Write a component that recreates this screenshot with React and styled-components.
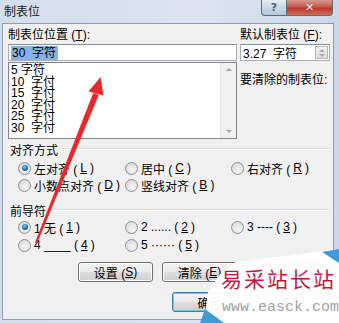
import React from "react";
import styled, { createGlobalStyle } from "styled-components";

const GlobalStyle = createGlobalStyle`
  html, body {
    margin: 0;
    padding: 0;
    background: #ffffff;
  }
  body {
    font-family: "Liberation Sans", "Noto Sans CJK SC", sans-serif;
    font-size: 12px;
    color: #000;
  }
`;

export const Window = styled.div`
  position: relative;
  width: 339px;
  height: 323px;
  overflow: hidden;
  background: linear-gradient(90deg, #d3deec 0%, #dce5f0 60%, #c9d7e8 100%);
  display: flex;
  flex-direction: column;
`;

export const TitleBar = styled.div`
  height: 23px;
  display: flex;
  align-items: flex-start;
  justify-content: space-between;
  padding-left: 4px;
`;

export const Title = styled.span`
  margin-top: 4px;
  font-size: 12px;
  line-height: 14px;
  font-family: "Noto Sans CJK SC", sans-serif;
  color: #1a1a1a;
`;

export const Controls = styled.div`
  display: flex;
  margin-right: 6px;
`;

export const CtrlButton = styled.div`
  width: ${(p) => p.$w}px;
  height: 16px;
  box-sizing: border-box;
  border: 1px solid #5d6b7d;
  border-top: none;
  display: flex;
  align-items: center;
  justify-content: center;
  font-family: "DejaVu Sans", sans-serif;
  font-weight: bold;
  font-size: 11px;
  background: ${(p) =>
    p.$close
      ? "linear-gradient(#d79b92 0%, #c8594b 45%, #b8392a 55%, #d46a56 100%)"
      : "linear-gradient(#e3ebf4 0%, #c9d6e6 50%, #b7c8dc 100%)"};
  color: ${(p) => (p.$close ? "#fff" : "#506178")};
  text-shadow: ${(p) => (p.$close ? "0 0 1px #3a1010" : "none")};
  border-radius: ${(p) => (p.$close ? "0 0 4px 0" : "0 0 0 4px")};
  border-left: ${(p) => (p.$close ? "none" : "1px solid #5d6b7d")};
`;

export const Body = styled.div`
  flex: 1;
  margin: 0 5px 3px 2px;
  border: 1px solid #8d9db1;
  background: #f0f0f0;
  display: flex;
  flex-direction: column;
  font-family: "Liberation Sans", "Noto Sans CJK SC", sans-serif;
`;

export const Top = styled.div`
  display: flex;
  padding: 4px 0 0 5px;
`;

export const LeftCol = styled.div`
  width: 229px;
  display: flex;
  flex-direction: column;
`;

export const RightCol = styled.div`
  width: 90px;
  margin-left: 3px;
  display: flex;
  flex-direction: column;
`;

export const Label = styled.div`
  height: 14px;
  line-height: 14px;
  white-space: nowrap;
  margin-top: ${(p) => p.$mt || 0}px;
`;

export const TextBox = styled.div`
  margin-top: 2px;
  height: 17px;
  box-sizing: border-box;
  border: 1px solid #abadb3;
  border-top-color: #888c94;
  background: #fff;
  display: flex;
  align-items: center;
  padding-left: 2px;
  position: relative;
  white-space: pre;
`;

export const Selected = styled.span`
  background: #86b3e6;
  line-height: 14px;
  padding: 0 2px 0 1px;
  white-space: pre;
`;

export const ListBox = styled.div`
  margin-top: 1px;
  height: 77px;
  box-sizing: border-box;
  border: 1px solid #828790;
  background: #fff;
  display: flex;
`;

export const Items = styled.div`
  flex: 1;
  padding: 2px 0 0 2px;
  display: flex;
  flex-direction: column;
`;

export const Item = styled.div`
  height: 11.5px;
  line-height: 11.5px;
  white-space: pre;
`;

export const ScrollBar = styled.div`
  width: 15px;
  background: #f1f1f1;
  border-left: 1px solid #e6e6e6;
  display: flex;
  flex-direction: column;
  justify-content: space-between;
  align-items: center;
  padding: 5px 0;
`;

export const Arrow = styled.span`
  width: 0;
  height: 0;
  border-left: 3px solid transparent;
  border-right: 3px solid transparent;
  ${(p) =>
    p.$down ? "border-top: 3px solid #a8a8a8;" : "border-bottom: 3px solid #a8a8a8;"}
`;

export const SpinBox = styled.div`
  display: flex;
  flex-direction: column;
  justify-content: center;
  gap: 2px;
  position: absolute;
  right: 1px;
  top: 1px;
  bottom: 1px;
  width: 13px;
  align-items: center;
  background: linear-gradient(#f3f3f3, #dcdcdc);
  border: 1px solid #b5b5b5;
  box-sizing: border-box;
`;

export const Heading = styled.div`
  display: flex;
  align-items: center;
  gap: 4px;
  height: 14px;
  padding-left: 7px;
  margin-top: ${(p) => p.$mt}px;
  white-space: nowrap;
  &::after {
    content: "";
    flex: 1;
    height: 1px;
    margin-right: 3px;
    background: #d5dfe5;
    border-bottom: 1px solid #fff;
  }
`;

export const RadioGrid = styled.div`
  display: grid;
  grid-template-columns: 107px 106px 1fr;
  row-gap: ${(p) => p.$gap}px;
  padding-left: 15px;
  margin-top: ${(p) => p.$mt}px;
`;

export const Option = styled.div`
  display: flex;
  align-items: center;
  gap: 3px;
  height: 14px;
  white-space: pre;
`;

export const Radio = styled.span`
  width: 13px;
  height: 13px;
  box-sizing: border-box;
  border-radius: 50%;
  border: 1px solid #8e8f8f;
  background: radial-gradient(circle at 60% 65%, #f6f6f6 0%, #e2e2e2 55%, #cfcfcf 100%);
  display: flex;
  align-items: center;
  justify-content: center;
  flex-shrink: 0;
  &::after {
    content: "";
    display: ${(p) => (p.$checked ? "block" : "none")};
    width: 6px;
    height: 6px;
    border-radius: 50%;
    background: radial-gradient(circle at 40% 35%, #8fd0f2 0%, #2878b6 45%, #0e3f6e 100%);
  }
`;

export const ButtonRow = styled.div`
  display: flex;
  gap: 9px;
  padding-left: ${(p) => p.$pl}px;
  margin-top: 10px;
`;

export const Button = styled.div`
  width: 75px;
  height: 20px;
  box-sizing: border-box;
  border: 1px solid ${(p) => (p.$default ? "#3c7fb1" : "#707070")};
  border-radius: 3px;
  background: linear-gradient(#f2f2f2 0%, #ebebeb 48%, #dddddd 52%, #cfcfcf 100%);
  box-shadow: ${(p) => (p.$default ? "inset 0 0 0 1px #6fc8f0" : "inset 0 0 0 1px #fcfcfc")};
  display: flex;
  align-items: center;
  justify-content: center;
  white-space: pre;
`;

export const Overlay = styled.svg`
  position: absolute;
  left: 0;
  top: 0;
  pointer-events: none;
`;

export const MarkTitle = styled.div`
  position: absolute;
  left: 221px;
  top: 265px;
  font-family: "Noto Sans CJK SC", serif;
  font-size: 21px;
  line-height: 26px;
  letter-spacing: 2px;
  color: #c5163e;
  white-space: nowrap;
`;

export const MarkUrl = styled.div`
  position: absolute;
  left: 222px;
  top: 300px;
  font-family: "Liberation Mono", monospace;
  font-size: 15px;
  line-height: 16px;
  color: #a3a3a3;
  white-space: nowrap;
`;

const Key = ({ k }) => (
  <>
    {" "}(<u>{k}</u>)
  </>
);

const tabs = ["5 字符", "10  字付", "15  字付", "20  字付", "25  字付", "30  字付"];

const align = [
  { text: "左对齐", k: "L", checked: true },
  { text: "居中", k: "C" },
  { text: "右对齐", k: "R" },
  { text: "小数点对齐", k: "D" },
  { text: "竖线对齐", k: "B" },
];

const leaders = [
  { text: "1 无", k: "1", checked: true },
  { text: "2 ......", k: "2" },
  { text: "3 ----", k: "3" },
  { text: "4 ____", k: "4" },
  { text: "5 ······", k: "5" },
];

function App() {
  return (
    <Window>
      <GlobalStyle />
      <TitleBar>
        <Title>制表位</Title>
        <Controls>
          <CtrlButton $w={26}>?</CtrlButton>
          <CtrlButton $w={46} $close>
            ✕
          </CtrlButton>
        </Controls>
      </TitleBar>
      <Body>
        <Top>
          <LeftCol>
            <Label>
              制表位位置<Key k="T" />:
            </Label>
            <TextBox>
              <Selected>30  字符</Selected>
            </TextBox>
            <ListBox>
              <Items>
                {tabs.map((t) => (
                  <Item key={t}>{t}</Item>
                ))}
              </Items>
              <ScrollBar>
                <Arrow />
                <Arrow $down />
              </ScrollBar>
            </ListBox>
          </LeftCol>
          <RightCol>
            <Label>
              默认制表位<Key k="F" />:
            </Label>
            <TextBox>
              3.27  字符
              <SpinBox>
                <Arrow />
                <Arrow $down />
              </SpinBox>
            </TextBox>
            <Label $mt={12}>要清除的制表位:</Label>
          </RightCol>
        </Top>

        <Heading $mt={3}>对齐方式</Heading>
        <RadioGrid $gap={3} $mt={5}>
          {align.map((o) => (
            <Option key={o.k}>
              <Radio $checked={o.checked} />
              {o.text}
              <Key k={o.k} />
            </Option>
          ))}
        </RadioGrid>

        <Heading $mt={11}>前导符</Heading>
        <RadioGrid $gap={4} $mt={3}>
          {leaders.map((o) => (
            <Option key={o.k}>
              <Radio $checked={o.checked} />
              {o.text}
              <Key k={o.k} />
            </Option>
          ))}
        </RadioGrid>

        <ButtonRow $pl={75}>
          <Button>
            设置<Key k="S" />
          </Button>
          <Button>
            清除<Key k="E" />
          </Button>
          <Button>
            全部清除<Key k="A" />
          </Button>
        </ButtonRow>
        <ButtonRow $pl={169}>
          <Button $default>确定</Button>
          <Button>取消</Button>
        </ButtonRow>
      </Body>

      <Overlay width="339" height="323" viewBox="0 0 339 323">
        <polygon
          points="93.2,92.9 98.8,95.1 37,243.4 35,242.6"
          fill="#e8282b"
        />
        <polygon points="100.5,77 88.5,91.5 103.5,95.5" fill="#e8282b" />
        <polygon
          points="236,262 339,249 339,323 204,323 208,292 221,273"
          fill="#ffffff"
          opacity="0.97"
        />
        <polygon points="322,252 339,249 339,263" fill="#3f9ad6" />
        <polygon points="200,323 224,323 205,309" fill="#3f9ad6" />
      </Overlay>
      <MarkTitle>易采站长站</MarkTitle>
      <MarkUrl>www.easck.com</MarkUrl>
    </Window>
  );
}

export default App;
